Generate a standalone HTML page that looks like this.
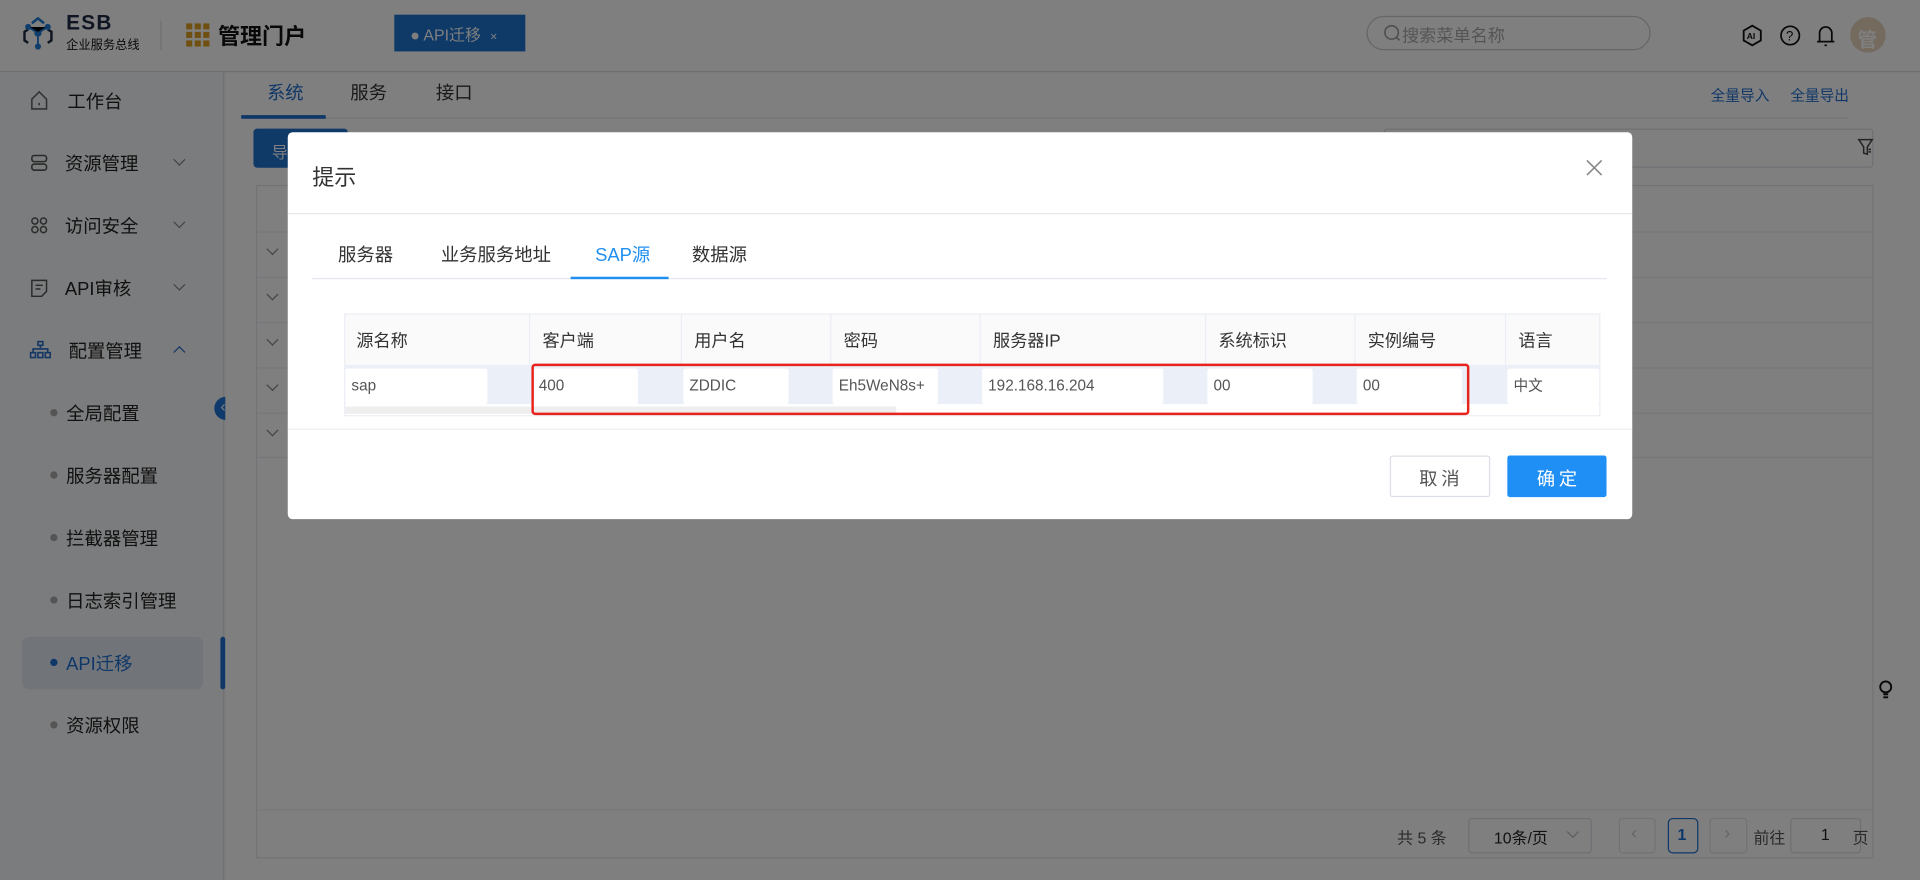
<!DOCTYPE html>
<html><head><meta charset="utf-8"><style>
*{box-sizing:border-box;margin:0;padding:0}
body{width:1920px;height:880px;overflow:hidden;background:#fff;font-family:"Liberation Sans","Noto Sans CJK SC",sans-serif;color:#333}
#w{position:absolute;left:0;top:0;width:1568px;height:719px;transform:scale(1.22449);transform-origin:0 0;background:#f0f2f5}
.a{position:absolute}
.t{position:absolute;white-space:nowrap}
#ov{position:absolute;left:0;top:0;width:1568px;height:719px;background:rgba(0,0,0,.5)}
.side .t{font-size:15px;color:#222}
.dot{position:absolute;width:6px;height:6px;border-radius:3px;background:#aaa}
.chev{position:absolute;width:7px;height:7px;border-right:1px solid #888;border-bottom:1px solid #888;transform:rotate(45deg)}
.th{position:absolute;top:256px;height:44px;line-height:44px;font-size:14px;color:#333;padding-left:10px;border-right:1px solid #ebeef5}
.in{position:absolute;top:301px;height:29px;line-height:29px;background:#fff;font-size:12.5px;color:#555;padding-left:5px;border-radius:2px}
</style></head><body><div id="w">
<!-- header -->
<div class="a" style="left:0;top:0;width:1568px;height:59px;background:#fff;border-bottom:1px solid #ddd"></div>
<svg class="a" style="left:18px;top:13px" width="26" height="28" viewBox="0 0 26 28"><path d="M8 6 L13 2 L18 6" stroke="#1f7ad8" stroke-width="2" fill="none"/><path d="M5 11 L2 13 L2 20 L5 22 M21 11 L24 13 L24 20 L21 22" stroke="#1f2a44" stroke-width="2" fill="none"/><circle cx="13" cy="14" r="3" fill="#1f7ad8"/><circle cx="5" cy="9" r="2.5" fill="#1f7ad8"/><circle cx="21" cy="9" r="2.5" fill="#1f7ad8"/><circle cx="13" cy="25" r="2.5" fill="#1f7ad8"/><path d="M5 9L13 14L21 9M13 14V25" stroke="#1f7ad8" stroke-width="1.5"/></svg>
<div class="t" style="left:54px;top:9px;font-size:17px;font-weight:bold;color:#1f2a44;letter-spacing:1px">ESB</div>
<div class="t" style="left:54px;top:28px;font-size:10px;color:#111">企业服务总线</div>
<div class="a" style="left:131px;top:17px;width:1px;height:24px;background:#ddd"></div>
<svg class="a" style="left:152px;top:19px" width="20" height="20"><g fill="#e0a020"><rect x="0" y="0" width="5" height="5"/><rect x="7" y="0" width="5" height="5"/><rect x="14" y="0" width="5" height="5"/><rect x="0" y="7" width="5" height="5"/><rect x="7" y="7" width="5" height="5"/><rect x="14" y="7" width="5" height="5"/><rect x="0" y="14" width="5" height="5"/><rect x="7" y="14" width="5" height="5"/><rect x="14" y="14" width="5" height="5"/></g></svg>
<div class="t" style="left:178px;top:16px;font-size:18px;font-weight:bold;color:#111">管理门户</div>
<div class="a" style="left:322px;top:12px;width:107px;height:30px;background:#1f74d0"></div>
<div class="t" style="left:335px;top:18px;font-size:13px;color:#fff">● API迁移 <span style="font-size:10px;margin-left:4px">×</span></div>
<div class="a" style="left:1116px;top:13px;width:232px;height:28px;border:1px solid #ccc;border-radius:14px;background:#fff"></div>
<svg class="a" style="left:1130px;top:20px" width="14" height="14" fill="none" stroke="#999" stroke-width="1.2"><circle cx="6.5" cy="6.5" r="5.5"/><path d="M10.5 10.5L13 13"/></svg>
<div class="t" style="left:1145px;top:19px;font-size:14px;color:#aaa">搜索菜单名称</div>
<svg class="a" style="left:1422px;top:20px" width="18" height="18"><path d="M9 1L16 5V13L9 17L2 13V5Z" stroke="#111" stroke-width="1.5" fill="none"/><text x="4.5" y="12" font-size="7" font-weight="bold" fill="#111" font-family="Liberation Sans">AI</text></svg>
<svg class="a" style="left:1453px;top:20px" width="18" height="18"><circle cx="9" cy="9" r="7.5" stroke="#111" stroke-width="1.4" fill="none"/><text x="5.5" y="13" font-size="11" fill="#111" font-family="Liberation Sans">?</text></svg>
<svg class="a" style="left:1482px;top:19px" width="18" height="20"><path d="M4 15V8a5 5 0 0 1 10 0v7M2 15H16M8 18h2" stroke="#111" stroke-width="1.4" fill="none"/></svg>
<div class="a" style="left:1511px;top:14px;width:29px;height:29px;border-radius:50%;background:#e8d5bd"></div>
<div class="t" style="left:1517px;top:19px;font-size:16px;color:#fff;font-weight:bold">管</div>
<!-- sidebar -->
<div class="a side" style="left:0;top:59px;width:183px;height:660px;background:#f7f8fa;border-right:1px solid #e4e4e4"></div>
<div class="side">
<svg class="a" style="left:25px;top:74px" width="14" height="16"><path d="M1 7L7 1L13 7V15H1Z" stroke="#666" stroke-width="1.3" fill="none"/><path d="M7 10v2" stroke="#666" stroke-width="1.3"/></svg>
<div class="t" style="left:55px;top:72px">工作台</div>
<svg class="a" style="left:25px;top:126px" width="14" height="14"><rect x="1" y="1" width="12" height="5" rx="2" stroke="#555" fill="none" stroke-width="1.3"/><rect x="1" y="8" width="12" height="5" rx="2" stroke="#555" fill="none" stroke-width="1.3"/></svg>
<div class="t" style="left:53px;top:123px">资源管理</div><div class="chev" style="left:143px;top:127px"></div>
<svg class="a" style="left:25px;top:177px" width="14" height="14" fill="none" stroke="#555" stroke-width="1.2"><circle cx="3.5" cy="3.5" r="2.5"/><circle cx="10.5" cy="3.5" r="2.5"/><circle cx="3.5" cy="10.5" r="2.5"/><circle cx="10.5" cy="10.5" r="2.5"/></svg>
<div class="t" style="left:53px;top:174px">访问安全</div><div class="chev" style="left:143px;top:178px"></div>
<svg class="a" style="left:25px;top:228px" width="14" height="15" fill="none" stroke="#555" stroke-width="1.2"><path d="M1 1H13V10L9 14H1Z M4 5H10 M4 8H8"/></svg>
<div class="t" style="left:53px;top:225px">API审核</div><div class="chev" style="left:143px;top:229px"></div>
<svg class="a" style="left:24px;top:278px" width="18" height="15" fill="none" stroke="#2a6fc9" stroke-width="1.3"><rect x="7" y="1" width="4" height="3"/><rect x="1" y="10" width="4" height="4"/><rect x="7" y="10" width="4" height="4"/><rect x="13" y="10" width="4" height="4"/><path d="M9 4V7M3 10V7H15V10"/></svg>
<div class="t" style="left:56px;top:276px">配置管理</div><div class="chev" style="left:143px;top:284px;transform:rotate(-135deg);border-color:#2a6fc9"></div>
<div class="dot" style="left:41px;top:334px"></div><div class="t" style="left:54px;top:327px">全局配置</div>
<div class="dot" style="left:41px;top:385px"></div><div class="t" style="left:54px;top:378px">服务器配置</div>
<div class="dot" style="left:41px;top:436px"></div><div class="t" style="left:54px;top:429px">拦截器管理</div>
<div class="dot" style="left:41px;top:487px"></div><div class="t" style="left:54px;top:480px">日志索引管理</div>
<div class="a" style="left:18px;top:520px;width:148px;height:43px;background:#e3eaf5;border-radius:6px"></div>
<div class="dot" style="left:41px;top:538px;background:#1f6fd0"></div><div class="t" style="left:54px;top:531px;color:#1f6fd0">API迁移</div>
<div class="a" style="left:180px;top:520px;width:4px;height:43px;background:#1f6fd0;border-radius:2px"></div>
<div class="dot" style="left:41px;top:589px"></div><div class="t" style="left:54px;top:582px">资源权限</div>
</div>
<div class="a" style="left:175px;top:324px;width:19px;height:19px;border-radius:50%;background:#1f74d8"></div>
<div class="t" style="left:180px;top:324px;color:#fff;font-size:13px">‹</div>
<!-- content -->
<div class="a" style="left:184px;top:59px;width:1384px;height:660px;background:#fff"></div>
<div class="t" style="left:218px;top:65px;font-size:15px;color:#1f6fd0">系统</div>
<div class="t" style="left:286px;top:65px;font-size:15px">服务</div>
<div class="t" style="left:356px;top:65px;font-size:15px">接口</div>
<div class="a" style="left:197px;top:96px;width:1313px;height:1px;background:#e4e7ed"></div>
<div class="a" style="left:197px;top:94px;width:69px;height:3px;background:#1f6fd0"></div>
<div class="t" style="left:1397px;top:69px;font-size:12px;color:#1f6fd0">全量导入</div>
<div class="t" style="left:1462px;top:69px;font-size:12px;color:#1f6fd0">全量导出</div>
<div class="a" style="left:207px;top:105px;width:77px;height:32px;background:#1f74d0;border-radius:3px"></div>
<div class="t" style="left:222px;top:114px;font-size:13px;color:#fff">导入</div>
<div class="a" style="left:1130px;top:105px;width:400px;height:32px;border:1px solid #dcdfe6;border-radius:3px"></div>
<svg class="a" style="left:1517px;top:113px" width="13" height="15" fill="none" stroke="#444" stroke-width="1.2"><path d="M1 1H12L8 7V13L5 12V7Z M9 9H11M9 11H11"/></svg>
<div class="a" style="left:209px;top:151px;width:1321px;height:550px;border:1px solid #e4e7ed"></div>
<div class="a" style="left:209px;top:189px;width:1321px;height:1px;background:#ebeef5"></div>
<div class="a" style="left:209px;top:226px;width:1321px;height:1px;background:#ebeef5"></div>
<div class="a" style="left:209px;top:263px;width:1321px;height:1px;background:#ebeef5"></div>
<div class="a" style="left:209px;top:300px;width:1321px;height:1px;background:#ebeef5"></div>
<div class="a" style="left:209px;top:337px;width:1321px;height:1px;background:#ebeef5"></div>
<div class="a" style="left:209px;top:373px;width:1321px;height:1px;background:#ebeef5"></div>
<div class="a" style="left:209px;top:661px;width:1321px;height:1px;background:#ebeef5"></div>
<div class="chev" style="left:219px;top:200px"></div><div class="chev" style="left:219px;top:237px"></div><div class="chev" style="left:219px;top:274px"></div><div class="chev" style="left:219px;top:311px"></div><div class="chev" style="left:219px;top:348px"></div>
<div class="t" style="left:1141px;top:674px;font-size:13px;color:#555">共 5 条</div>
<div class="a" style="left:1199px;top:668px;width:101px;height:29px;border:1px solid #dcdfe6;border-radius:3px"></div>
<div class="t" style="left:1220px;top:674px;font-size:13px;color:#222">10条/页</div>
<div class="chev" style="left:1281px;top:676px;border-color:#bbb"></div>
<div class="a" style="left:1322px;top:668px;width:30px;height:29px;border:1px solid #e4e4e4;border-radius:3px"></div>
<div class="t" style="left:1332px;top:672px;font-size:15px;color:#ccc">‹</div>
<div class="a" style="left:1362px;top:668px;width:25px;height:29px;border:1px solid #1f6fd0;border-radius:4px"></div>
<div class="t" style="left:1370px;top:674px;font-size:13px;font-weight:bold;color:#1f6fd0">1</div>
<div class="a" style="left:1396px;top:668px;width:31px;height:29px;border:1px solid #e4e4e4;border-radius:3px"></div>
<div class="t" style="left:1408px;top:672px;font-size:15px;color:#ccc">›</div>
<div class="t" style="left:1432px;top:674px;font-size:13px;color:#555">前往</div>
<div class="a" style="left:1462px;top:668px;width:58px;height:29px;border:1px solid #dcdfe6;border-radius:3px"></div>
<div class="t" style="left:1487px;top:674px;font-size:13px;color:#222">1</div>
<div class="t" style="left:1513px;top:674px;font-size:13px;color:#555">页</div>
<svg class="a" style="left:1534px;top:555px" width="12" height="16" fill="none" stroke="#111" stroke-width="1.5"><circle cx="6" cy="6" r="4.5"/><path d="M4 12H8M4 14.5H8"/></svg>
<div id="ov"></div>
<!-- modal -->
<div class="a" style="left:235px;top:108px;width:1098px;height:316px;background:#fff;border-radius:4px"></div>
<div class="t" style="left:255px;top:131px;font-size:18px;color:#333">提示</div>
<svg class="a" style="left:1295px;top:130px" width="14" height="14" stroke="#888" stroke-width="1.3"><path d="M1 1L13 13M13 1L1 13"/></svg>
<div class="a" style="left:235px;top:174px;width:1098px;height:1px;background:#e8e8e8"></div>
<div class="t" style="left:276px;top:197px;font-size:15px;color:#333">服务器</div>
<div class="t" style="left:360px;top:197px;font-size:15px;color:#333">业务服务地址</div>
<div class="t" style="left:486px;top:197px;font-size:15px;color:#1f8ff0">SAP源</div>
<div class="t" style="left:565px;top:197px;font-size:15px;color:#333">数据源</div>
<div class="a" style="left:255px;top:227px;width:1057px;height:1px;background:#e4e7ed"></div>
<div class="a" style="left:466px;top:226px;width:80px;height:2px;background:#1f8ff0"></div>
<div class="a" style="left:281px;top:256px;width:1026px;height:84px;border:1px solid #ebeef5;background:#fafafa"></div>
<div class="th" style="left:281px;width:152px">源名称</div>
<div class="th" style="left:433px;width:124px">客户端</div>
<div class="th" style="left:557px;width:122px">用户名</div>
<div class="th" style="left:679px;width:122px">密码</div>
<div class="th" style="left:801px;width:184px">服务器IP</div>
<div class="th" style="left:985px;width:122px">系统标识</div>
<div class="th" style="left:1107px;width:123px">实例编号</div>
<div class="th" style="left:1230px;width:77px;border-right:none">语言</div>
<div class="a" style="left:282px;top:298px;width:1024px;height:32px;background:#ebeff7"></div>
<div class="a" style="left:282px;top:330px;width:1024px;height:9px;background:#fff"></div>
<div class="a" style="left:282px;top:332px;width:450px;height:6px;background:#eeeeee"></div>
<div class="in" style="left:282px;width:116px">sap</div>
<div class="in" style="left:435px;width:86px">400</div>
<div class="in" style="left:558px;width:86px">ZDDIC</div>
<div class="in" style="left:680px;width:86px">Eh5WeN8s+</div>
<div class="in" style="left:802px;width:148px">192.168.16.204</div>
<div class="in" style="left:986px;width:86px">00</div>
<div class="in" style="left:1108px;width:86px">00</div>
<div class="in" style="left:1231px;width:75px;font-size:12px">中文</div>
<div class="a" style="left:434px;top:297px;width:766px;height:42px;border:2.5px solid #e8231c;border-radius:3px"></div>
<div class="a" style="left:235px;top:350px;width:1098px;height:1px;background:#eee"></div>
<div class="a" style="left:1135px;top:372px;width:82px;height:34px;border:1px solid #dcdfe6;border-radius:2px;background:#fff"></div>
<div class="t" style="left:1159px;top:380px;font-size:15px;color:#555;letter-spacing:3px">取消</div>
<div class="a" style="left:1231px;top:372px;width:81px;height:34px;background:#1f8ff5;border-radius:2px"></div>
<div class="t" style="left:1255px;top:380px;font-size:15px;color:#fff;letter-spacing:3px">确定</div>
</div></body></html>
